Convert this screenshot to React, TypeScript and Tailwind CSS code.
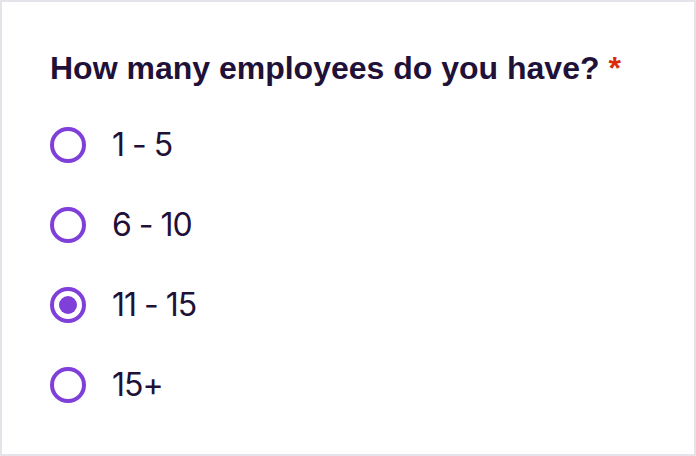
import { useState } from "react";

const OPTIONS = ["1 - 5", "6 - 10", "11 - 15", "15+"];

export default function App() {
  const [selected, setSelected] = useState("11 - 15");

  return (
    <div className="w-[696px] h-[456px] bg-white border-2 border-[#e3e3e9] px-[48px] pt-[47px]">
      <h2 className="font-['Liberation_Sans',Arial,sans-serif] text-[32px] font-bold leading-[38px] text-[#1f1138]">
        How many employees do you have? <span className="text-[#d92c0a]">*</span>
      </h2>
      <div className="mt-[18px] flex flex-col">
        {OPTIONS.map((opt) => {
          const on = opt === selected;
          return (
            <label
              key={opt}
              onClick={() => setSelected(opt)}
              className="h-[80px] flex items-center gap-[26px] cursor-pointer"
            >
              <span className="size-[36px] shrink-0 rounded-full border-[4px] border-[#7f3fd9] flex items-center justify-center">
                {on && <span className="size-[18px] rounded-full bg-[#7f3fd9]" />}
              </span>
              <span className="font-['Inter','Noto_Sans',sans-serif] text-[32px] tracking-[-1px] text-[#1f1138] leading-none">
                {opt}
              </span>
            </label>
          );
        })}
      </div>
    </div>
  );
}
